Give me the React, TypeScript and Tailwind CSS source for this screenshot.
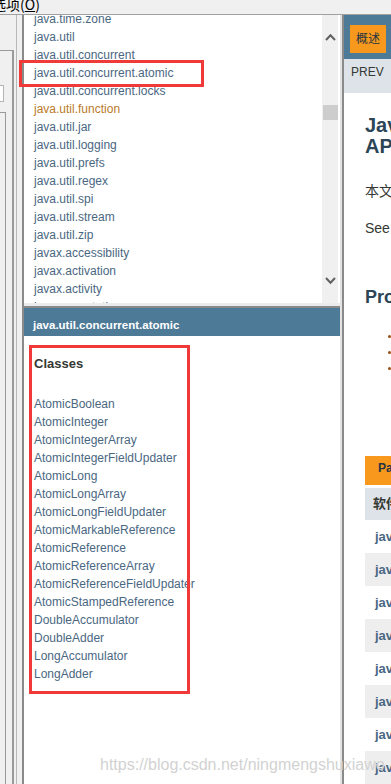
const packages = [
  'java.time.zone',
  'java.util',
  'java.util.concurrent',
  'java.util.concurrent.atomic',
  'java.util.concurrent.locks',
  'java.util.function',
  'java.util.jar',
  'java.util.logging',
  'java.util.prefs',
  'java.util.regex',
  'java.util.spi',
  'java.util.stream',
  'java.util.zip',
  'javax.accessibility',
  'javax.activation',
  'javax.activity',
  'javax.annotation',
]

const classes = [
  'AtomicBoolean',
  'AtomicInteger',
  'AtomicIntegerArray',
  'AtomicIntegerFieldUpdater',
  'AtomicLong',
  'AtomicLongArray',
  'AtomicLongFieldUpdater',
  'AtomicMarkableReference',
  'AtomicReference',
  'AtomicReferenceArray',
  'AtomicReferenceFieldUpdater',
  'AtomicStampedReference',
  'DoubleAccumulator',
  'DoubleAdder',
  'LongAccumulator',
  'LongAdder',
]

const tableRows = [
  'java.applet',
  'java.awt',
  'java.awt.color',
  'java.awt.datatransfer',
  'java.awt.dnd',
  'java.awt.event',
  'java.awt.font',
  'java.awt.geom',
]

function Chevron({ up }: { up?: boolean }) {
  return (
    <svg width="11" height="8" viewBox="0 0 11 8" fill="none" stroke="#606060" strokeWidth="2">
      {up ? <path d="M1 7L5.5 2.2L10 7" /> : <path d="M1 1L5.5 5.8L10 1" />}
    </svg>
  )
}

export default function App() {
  return (
    <div className="relative h-[784px] w-[391px] overflow-hidden bg-[#f0f0f0] font-['Liberation_Sans','Noto_Sans_CJK_SC',sans-serif]">
      {/* menu bar */}
      <div className="h-[15px] overflow-hidden border-b border-[#a0a0a0]">
        <div className="-ml-[8px] -mt-[3px] h-[14px] whitespace-nowrap font-['Noto_Sans_CJK_SC',sans-serif] text-[14px] leading-[14px] text-black">
          选项(<span className="underline">O</span>)
        </div>
      </div>

      <div className="flex h-[769px]">
        {/* window chrome on the left */}
        <div className="flex w-[24px] border-r-2 border-[#8a8a8a]">
          <div className="flex w-[14px] flex-col">
            <div className="h-[35px]" />
            <div className="flex flex-1 flex-col border-t border-r-2 border-[#9a9a9a]">
              <div className="h-[34px]" />
              <div className="h-[17px] w-[4px] border-y border-r border-[#b4b4b4] bg-white" />
              <div className="h-[10px]" />
              <div className="flex flex-1">
                <div className="w-[6px] border-t border-r border-[#9a9a9a]" />
              </div>
            </div>
          </div>
          <div className="flex-1">
            <div className="ml-[2px] h-full w-[1px] bg-[#b8b8b8]" />
          </div>
        </div>

        {/* packages + classes frames */}
        <div className="flex w-[316px] flex-col">
          <div className="flex h-[288px]">
            <div className="flex-1 overflow-hidden bg-white">
              <ul className="-mt-[5px] pl-[10px] text-[12px] leading-[18px] text-[#4a6782]">
                {packages.map((p) => (
                  <li key={p} className={p === 'java.util.function' ? 'text-[#bb7a2a]' : ''}>
                    {p}
                  </li>
                ))}
              </ul>
            </div>
            <div className="flex w-[16px] flex-col items-center bg-[#f0f0f0]">
              <div className="mt-[18px]">
                <Chevron up />
              </div>
              <div className="ml-[1px] mt-[64px] h-[15px] w-[15px] bg-[#cdcdcd]" />
              <div className="mt-[157px]">
                <Chevron />
              </div>
            </div>
            <div className="w-[2px] bg-white" />
          </div>
          <div className="h-[3px] bg-[#ececec]" />
          <div className="h-[2px] bg-[#8a8a8a]" />
          <div className="flex flex-1 flex-col bg-white">
            <div className="h-[28px] bg-[#4d7a97] pl-[9px] pt-[8px] text-[11.5px] font-bold leading-[18px] text-white">
              java.util.concurrent.atomic
            </div>
            <h2 className="mt-[19px] pl-[10px] text-[13px] font-bold leading-[18px] text-[#353833]">Classes</h2>
            <ul className="mt-[22px] pl-[10px] text-[12px] leading-[18px] text-[#4a6782]">
              {classes.map((c) => (
                <li key={c}>{c}</li>
              ))}
            </ul>
          </div>
        </div>

        {/* frame divider */}
        <div className="w-[2px] bg-[#e3e3e3]" />
        <div className="w-[2px] bg-[#8a8a8a]" />

        {/* overview frame */}
        <div className="flex flex-1 flex-col overflow-hidden whitespace-nowrap bg-white text-[14px] text-[#353833]">
          <div className="h-[44px] shrink-0 bg-[#4d7a97] pl-[6px] pt-[10px]">
            <div className="flex h-[28px] w-[36px] items-center justify-center bg-[#f8981d] text-[12px] text-[#253441]">
              概述
            </div>
          </div>
          <div className="h-[34px] shrink-0 bg-[#dee3e9] pl-[7px] pt-[4px] text-[12px] leading-[18px]">PREV</div>
          <div className="pl-[21px]">
            <h1 className="mt-[22px] text-[20px] font-bold leading-[21px] text-[#2c4557]">
              <div>Java™ Platform, Standard Edition 8</div>
              <div>API Specification</div>
            </h1>
            <p className="mt-[25px] leading-[18px]">本文档是 Java™ Platform, Standard Edition 8 的 API 规范。</p>
            <p className="mt-[19px] leading-[18px]">See: Description</p>
            <h2 className="mt-[50px] text-[18px] font-bold leading-[21px] text-[#2c4557]">Profiles</h2>
            <ul className="mt-[20px]">
              {[0, 1, 2].map((i) => (
                <li key={i} className="flex h-[16px] items-center pl-[23px]">
                  <span className="h-[3px] w-[3px] rounded-full bg-[#9a4e12]" />
                </li>
              ))}
            </ul>
            <div className="mt-[80px] h-[29px] bg-[#f8981d] pl-[13px] pt-[3px] text-[12px] font-bold leading-[18px] text-[#253441]">
              Packages
            </div>
            <div className="h-[3px]" />
            <div className="h-[32px] bg-[#dee3e9] pl-[8px] text-[13px] font-bold leading-[32px] text-[#353833]">软件包</div>
            {tableRows.map((r, i) => (
              <div
                key={r}
                className={`h-[33px] pl-[10px] text-[13px] font-bold leading-[33px] text-[#4a6782] ${i % 2 === 0 ? 'bg-white' : 'bg-[#eeeeef]'}`}
              >
                {r}
              </div>
            ))}
          </div>
        </div>
      </div>

      {/* annotations */}
      <div className="absolute left-[19px] top-[60px] h-[27px] w-[185px] border-[3px] border-[#f03a3a]" />
      <div className="absolute left-[29px] top-[345px] h-[349px] w-[161px] border-[3px] border-[#f03a3a]" />

      {/* watermark */}
      <div className="absolute left-[100px] top-[755px] whitespace-nowrap text-[16px] leading-[20px] text-[#d2d2d2]">
        https://blog.csdn.net/ningmengshuxiawo
      </div>
    </div>
  )
}
